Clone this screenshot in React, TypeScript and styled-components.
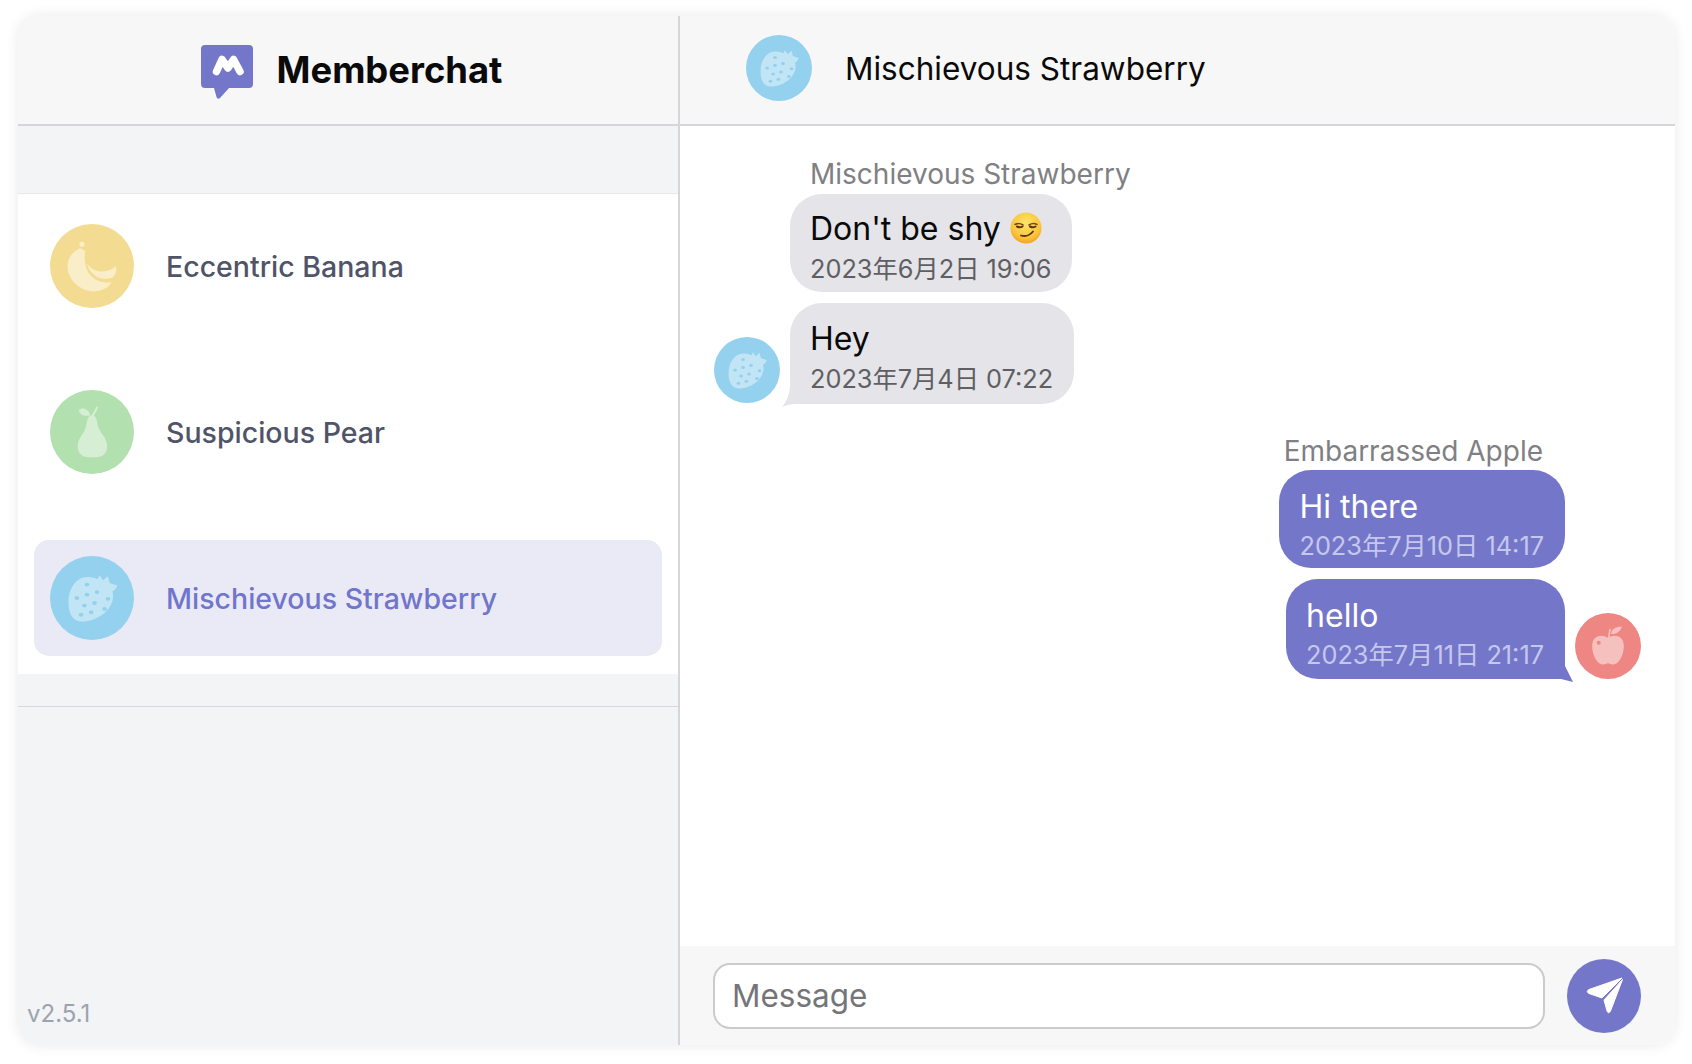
import React from 'react'
import styled, { createGlobalStyle } from 'styled-components'

const GlobalStyle = createGlobalStyle`
  html, body {
    margin: 0;
    padding: 0;
    background: #fff;
  }

  * {
    box-sizing: border-box;
  }

  body {
    font-family: Inter, "Noto Sans CJK JP", sans-serif;
  }
`

const colors = {
  primary: '#7477c9',
  border: '#d6d6da',
  sidebar: '#f3f4f6',
  header: '#f7f7f8',
}

const Page = styled.div`
  width: 1692px;
  height: 1064px;
  padding: 16px 17px 19px 18px;
  overflow: hidden;
`

const Window = styled.div`
  height: 100%;
  display: grid;
  grid-template-columns: 662px 1fr;
  border-radius: 22px;
  overflow: hidden;
  box-shadow: 0 0 14px rgba(0, 0, 0, 0.09);
`

const Sidebar = styled.aside`
  display: flex;
  flex-direction: column;
  background: ${colors.sidebar};
  border-right: 2px solid ${colors.border};
  min-height: 0;
`

const BrandBar = styled.header`
  flex: 0 0 110px;
  display: flex;
  align-items: center;
  justify-content: center;
  gap: 23px;
  padding-left: 6px;
  background: ${colors.header};
  border-bottom: 2px solid ${colors.border};

  svg {
    margin-top: 4px;
  }
`

const BrandName = styled.h1`
  margin: 0;
  font-size: 36.4px;
  font-weight: 700;
  color: #0a0a0a;
`

const ContactList = styled.ul`
  list-style: none;
  margin: 67px 0 0;
  padding: 0 16px 16px;
  height: 481px;
  background: #fff;
  border-top: 1px solid #e8e8ec;
`

const ContactRow = styled.li<{ $active?: boolean }>`
  height: 116px;
  margin-top: 14px;
  padding: 0 19px 0 16px;
  display: flex;
  align-items: center;
  gap: 32px;
  border-radius: 15px;
  background: ${p => (p.$active ? '#eaeaf6' : 'transparent')};
  color: ${p => (p.$active ? '#7175cb' : '#4f5468')};
  font-size: 28.5px;
  font-weight: 500;

  & + & {
    margin-top: 50px;
  }
`

const SidebarRest = styled.div`
  flex: 1;
  margin-top: 32px;
  display: flex;
  align-items: flex-end;
  padding: 0 0 17px 9px;
  border-top: 1px solid ${colors.border};
`

const Version = styled.span`
  font-size: 24px;
  color: #9ca3af;
`

const Main = styled.main`
  display: flex;
  flex-direction: column;
  min-height: 0;
  background: #fff;
`

const ChatBar = styled.header`
  flex: 0 0 110px;
  display: flex;
  align-items: center;
  gap: 33px;
  padding: 0 0 4px 66px;
  background: ${colors.header};
  border-bottom: 2px solid ${colors.border};
  font-size: 31.5px;
  color: #0a0a0a;
`

const Messages = styled.section`
  flex: 1;
  padding: 30px 34px 0 33px;
  display: flex;
  flex-direction: column;
  gap: 30px;
`

const Group = styled.div<{ $mine?: boolean }>`
  display: flex;
  align-items: flex-end;
  gap: 10px;
  justify-content: ${p => (p.$mine ? 'flex-end' : 'flex-start')};
  padding-left: ${p => (p.$mine ? 0 : '1px')};
`

const Stack = styled.div<{ $mine?: boolean }>`
  display: flex;
  flex-direction: column;
  align-items: ${p => (p.$mine ? 'flex-end' : 'flex-start')};
  gap: 11px;
  margin-bottom: ${p => (p.$mine ? '0' : '-1px')};
`

const Sender = styled.div<{ $mine?: boolean }>`
  font-size: 28px;
  line-height: 36px;
  color: #808084;
  margin: 0 ${p => (p.$mine ? '22px' : '0')} ${p => (p.$mine ? '-10px' : '-9px')} ${p => (p.$mine ? '0' : '20px')};
`

const bubbleHeight = (mine?: boolean, tailed?: boolean) => {
  if (!tailed) return 98
  return mine ? 100 : 101
}

const bubblePadTop = (mine?: boolean, tailed?: boolean) => {
  if (mine) return 15
  return tailed ? 13 : 12
}

const Bubble = styled.div<{ $mine?: boolean; $tailed?: boolean }>`
  position: relative;
  height: ${p => bubbleHeight(p.$mine, p.$tailed)}px;
  padding: ${p => bubblePadTop(p.$mine, p.$tailed)}px 21px 0 20px;
  border-radius: 32px;
  background: ${p => (p.$mine ? colors.primary : '#e4e4e9')};
  color: ${p => (p.$mine ? '#fff' : '#0a0a0a')};
`

const BubbleText = styled.div<{ $mine?: boolean }>`
  position: relative;
  display: flex;
  align-items: center;
  gap: 9px;
  height: ${p => (p.$mine ? '42px' : '44px')};
  font-size: 32px;
`

const BubbleDate = styled.div<{ $mine?: boolean }>`
  position: relative;
  line-height: 38px;
  font-size: 25.3px;
  white-space: nowrap;
  color: ${p => (p.$mine ? '#c5c7ee' : '#5f5f63')};
`

const Tail = styled.svg<{ $mine?: boolean }>`
  position: absolute;
  bottom: -3px;
  width: 40px;
  height: 40px;
  ${p => (p.$mine ? 'right: -8px;' : 'left: -8px;')}
  fill: ${p => (p.$mine ? colors.primary : '#e4e4e9')};
`

const Composer = styled.footer`
  flex: 0 0 99px;
  display: flex;
  align-items: center;
  gap: 22px;
  padding: 0 34px 0 33px;
  background: ${colors.header};
`

const MessageInput = styled.input`
  flex: 1;
  min-width: 0;
  height: 66px;
  padding: 0 17px;
  border: 2px solid #cbcbcd;
  border-radius: 17px;
  background: #fff;
  font: 400 31.5px Inter, sans-serif;
  color: #0a0a0a;

  &::placeholder {
    color: #757579;
    opacity: 1;
  }
`

const SendButton = styled.button`
  flex: 0 0 74px;
  width: 74px;
  height: 74px;
  padding: 0;
  border: 0;
  border-radius: 50%;
  background: ${colors.primary};

  svg {
    display: block;
  }
`

const AvatarCircle = styled.div<{ $size: number; $bg: string }>`
  flex: 0 0 ${p => p.$size}px;
  width: ${p => p.$size}px;
  height: ${p => p.$size}px;
  border-radius: 50%;
  background: ${p => p.$bg};

  svg {
    display: block;
    width: 100%;
    height: 100%;
  }
`

type Fruit = 'banana' | 'pear' | 'strawberry' | 'apple'

const fruitColors: Record<Fruit, { bg: string; fg: string }> = {
  banana: { bg: '#f3dc92', fg: '#faeec8' },
  pear: { bg: '#b2e0ae', fg: '#d6efd4' },
  strawberry: { bg: '#93d1ee', fg: '#c2e5f5' },
  apple: { bg: '#ee8683', fg: '#f6c0be' },
}

const seeds = [
  [32, 50], [44, 34], [44, 46], [56, 43], [69, 51],
  [41, 59], [53, 56], [65, 63], [37, 70], [49, 67],
]

function FruitGlyph({ fruit }: { fruit: Fruit }) {
  const { bg, fg } = fruitColors[fruit]
  if (fruit === 'banana') {
    return (
      <svg viewBox="0 0 100 100" fill={fg}>
        <circle cx="38" cy="24" r="3" />
        <path d="M36 29C26 33 20 42 21 52C22 68 38 81 54 80C63 79 71 75 73 69C66 71 56 69 49 62C42 55 40 42 42 32Z" />
        <path d="M44 47C50 55 58 58 66 56C72 55 77 52 78 50C80 54 79 60 74 64C64 67 55 64 50 58C47 55 45 51 44 47Z" />
      </svg>
    )
  }
  if (fruit === 'pear') {
    return (
      <svg viewBox="0 0 100 100" fill={fg}>
        <path d="M50 30C45 30 44 36 43 43C41 52 33 57 33 67C33 76 39 80 46 80L55 80C62 80 68 76 68 67C68 57 60 52 57 43C56 36 55 30 50 30Z" />
        <path d="M34 24C38 20 46 22 48 30C41 32 36 30 34 24Z" />
        <path d="M50 32L56 21" stroke={fg} strokeWidth="2.5" strokeLinecap="round" />
      </svg>
    )
  }
  if (fruit === 'strawberry') {
    return (
      <svg viewBox="0 0 100 100" fill={fg}>
        <path d="M44 25C32 25 22 38 22 55C22 70 28 78 38 78C55 78 73 66 75 50C76 42 72 36 66 33C60 28 52 25 44 25Z" />
        <path d="M55 31L59 23L63 29L69 24L71 32L80 35C78 42 72 44 67 41Z" />
        {seeds.map(([cx, cy]) => (
          <ellipse key={`${cx}-${cy}`} cx={cx} cy={cy} rx="2.8" ry="2.3" fill={bg} />
        ))}
      </svg>
    )
  }
  return (
    <svg viewBox="0 0 100 100" fill={fg}>
      <path d="M50 38C44 32 26 32 26 50C26 64 34 78 42 78C46 78 48 76 50 76C52 76 54 78 58 78C66 78 74 64 74 50C74 32 56 32 50 38Z" />
      <path d="M55 30C56 24 63 20 71 21C69 28 62 33 55 32Z" />
      <path d="M51 38L53 25" stroke={fg} strokeWidth="2.5" strokeLinecap="round" />
      <circle cx="36" cy="45" r="3" fill={bg} />
    </svg>
  )
}

function Avatar({ fruit, size = 66 }: { fruit: Fruit; size?: number }) {
  return (
    <AvatarCircle $size={size} $bg={fruitColors[fruit].bg}>
      <FruitGlyph fruit={fruit} />
    </AvatarCircle>
  )
}

function Logo() {
  return (
    <svg width="54" height="56" viewBox="0 0 54 56">
      <path
        d="M5 1H49A4 4 0 0 1 53 5V40A4 4 0 0 1 49 44H29L20 54Q17.500 56 16.500 53L14 44H5A4 4 0 0 1 1 40V5A4 4 0 0 1 5 1Z"
        fill={colors.primary}
      />
      <path
        d="M16.500 27.500L22 15.500L28 24L33.500 15.500L40 27.500"
        fill="none"
        stroke="#fff"
        strokeWidth="7.500"
        strokeLinecap="round"
        strokeLinejoin="round"
      />
    </svg>
  )
}

function SmirkEmoji() {
  return (
    <svg width="32" height="32" viewBox="0 0 32 32">
      <defs>
        <radialGradient id="smirk-face" cx="50%" cy="35%" r="70%">
          <stop offset="0%" stopColor="#fde56a" />
          <stop offset="65%" stopColor="#fbc53c" />
          <stop offset="100%" stopColor="#f29a1f" />
        </radialGradient>
      </defs>
      <circle cx="16" cy="16" r="15.500" fill="url(#smirk-face)" />
      <path d="M5 12.500Q9 10.500 13 13M19 13Q23 10.500 27 12.500" fill="none" stroke="#7a4a12" strokeWidth="1.500" strokeLinecap="round" />
      <path d="M7 14.500Q10 16 12.500 14.500M20 14.500Q23 16 25.500 14.500" fill="none" stroke="#5b3510" strokeWidth="2" strokeLinecap="round" />
      <path d="M11 23.500Q18 25.500 23 19.500" fill="none" stroke="#5b3510" strokeWidth="1.800" strokeLinecap="round" />
    </svg>
  )
}

function SendIcon() {
  return (
    <svg width="74" height="74" viewBox="0 0 74 74" fill="#fff">
      <path d="M55 19L22 30.500Q18.500 32.500 22 34.500L35 39Z" stroke="#fff" strokeLinejoin="round" />
      <path d="M55.500 20.500L37 41L40 52Q41.500 55.500 43.500 52Z" stroke="#fff" strokeLinejoin="round" />
    </svg>
  )
}

const App = () => (
  <Page>
    <GlobalStyle />
    <Window>
      <Sidebar>
        <BrandBar>
          <Logo />
          <BrandName>Memberchat</BrandName>
        </BrandBar>
        <ContactList>
          <ContactRow>
            <Avatar fruit="banana" size={84} />
            Eccentric Banana
          </ContactRow>
          <ContactRow>
            <Avatar fruit="pear" size={84} />
            Suspicious Pear
          </ContactRow>
          <ContactRow $active>
            <Avatar fruit="strawberry" size={84} />
            Mischievous Strawberry
          </ContactRow>
        </ContactList>
        <SidebarRest>
          <Version>v2.5.1</Version>
        </SidebarRest>
      </Sidebar>
      <Main>
        <ChatBar>
          <Avatar fruit="strawberry" />
          Mischievous Strawberry
        </ChatBar>
        <Messages>
          <Group>
            <Avatar fruit="strawberry" />
            <Stack>
              <Sender>Mischievous Strawberry</Sender>
              <Bubble>
                <BubbleText>
                  Don't be shy <SmirkEmoji />
                </BubbleText>
                <BubbleDate>2023年6月2日 19:06</BubbleDate>
              </Bubble>
              <Bubble $tailed>
                <Tail viewBox="0 0 40 40">
                  <path d="M8 0V20Q7 32 0 40Q6 37 14 37H40V0Z" />
                </Tail>
                <BubbleText>Hey</BubbleText>
                <BubbleDate>2023年7月4日 07:22</BubbleDate>
              </Bubble>
            </Stack>
          </Group>
          <Group $mine>
            <Stack $mine>
              <Sender $mine>Embarrassed Apple</Sender>
              <Bubble $mine>
                <BubbleText $mine>Hi there</BubbleText>
                <BubbleDate $mine>2023年7月10日 14:17</BubbleDate>
              </Bubble>
              <Bubble $mine $tailed>
                <Tail $mine viewBox="0 0 40 40">
                  <path d="M32 0V24L40 40L28 37H0V0Z" />
                </Tail>
                <BubbleText $mine>hello</BubbleText>
                <BubbleDate $mine>2023年7月11日 21:17</BubbleDate>
              </Bubble>
            </Stack>
            <Avatar fruit="apple" />
          </Group>
        </Messages>
        <Composer>
          <MessageInput placeholder="Message" />
          <SendButton aria-label="Send">
            <SendIcon />
          </SendButton>
        </Composer>
      </Main>
    </Window>
  </Page>
)

export default App
